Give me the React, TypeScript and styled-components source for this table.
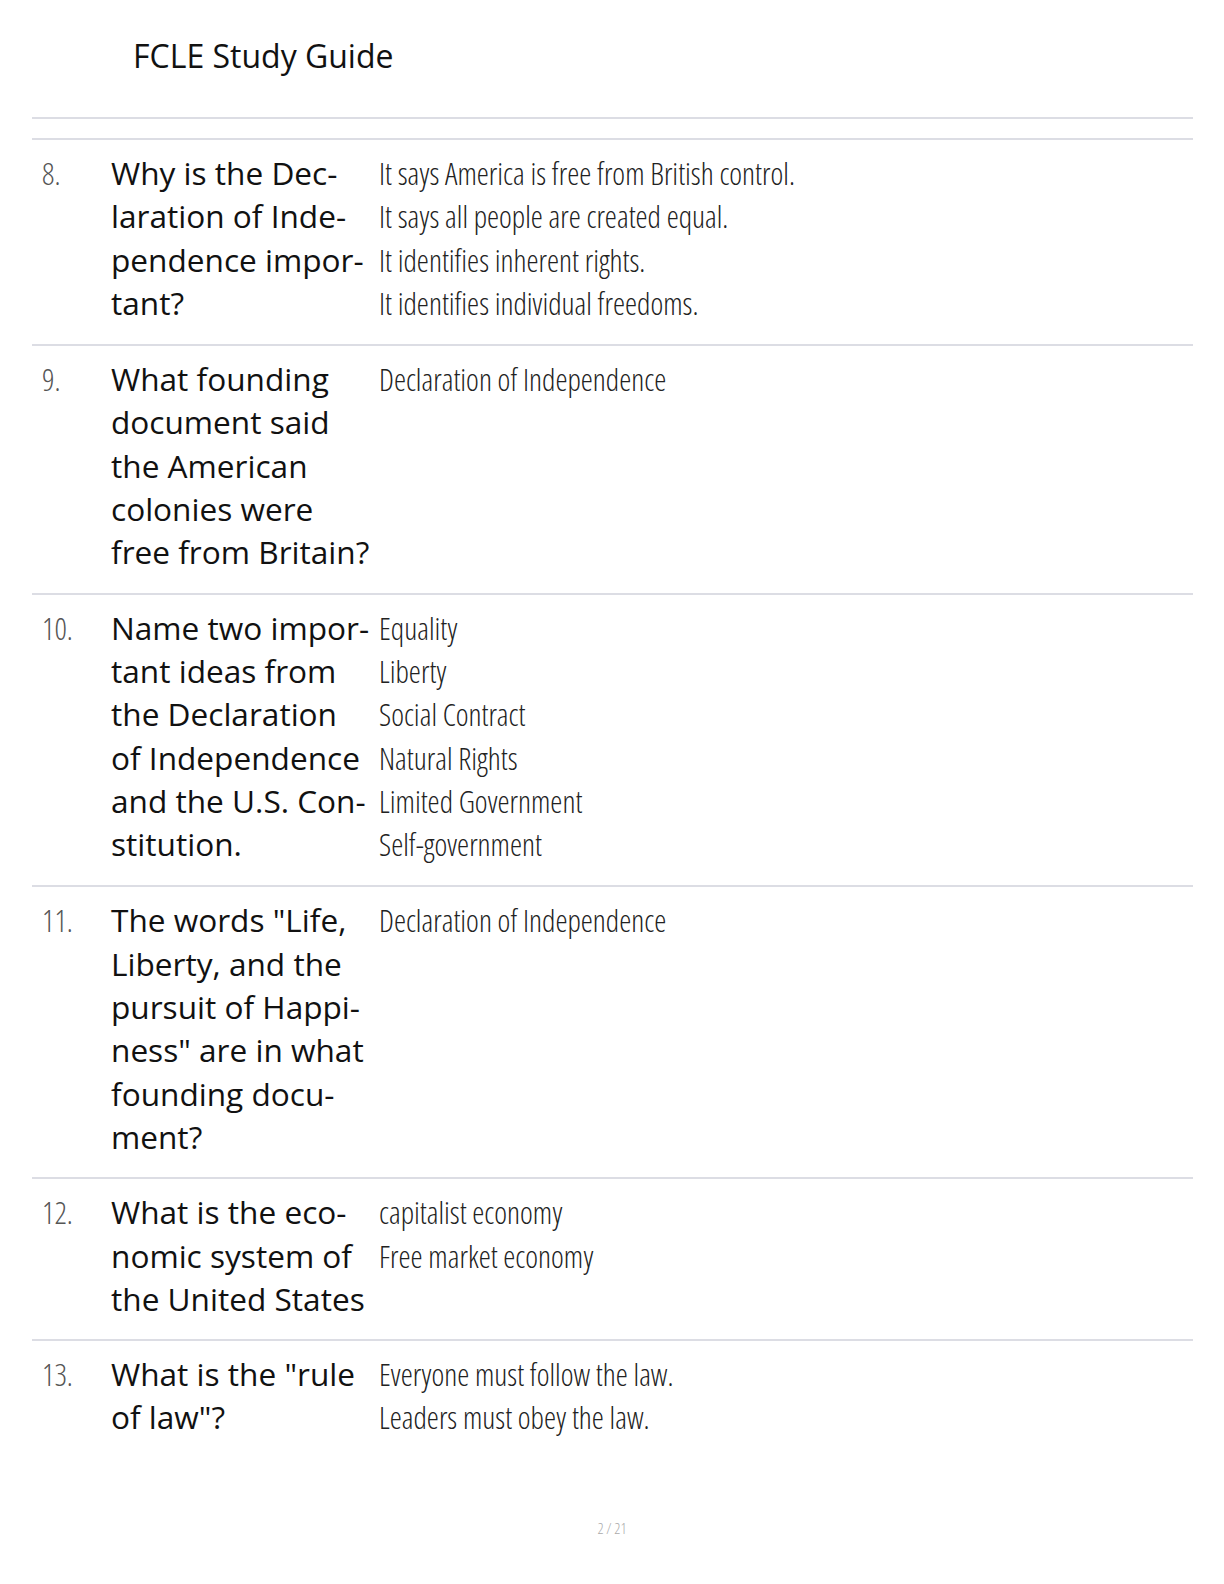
import { FC } from 'react';
import styled, { createGlobalStyle } from 'styled-components';

const GlobalStyle = createGlobalStyle`
	html,
	body {
		margin: 0;
		padding: 0;
		background: #fff;
	}

	body {
		font-family: 'Open Sans', 'Noto Sans', sans-serif;
		color: #111;
	}
`;

interface ICard {
	num: number;
	question: string[];
	answers: string[];
}

const cards: ICard[] = [
	{
		num: 8,
		question: ['Why is the Dec-', 'laration of Inde-', 'pendence impor-', 'tant?'],
		answers: [
			'It says America is free from British control.',
			'It says all people are created equal.',
			'It identifies inherent rights.',
			'It identifies individual freedoms.',
		],
	},
	{
		num: 9,
		question: ['What founding', 'document said', 'the American', 'colonies were', 'free from Britain?'],
		answers: ['Declaration of Independence'],
	},
	{
		num: 10,
		question: [
			'Name two impor-',
			'tant ideas from',
			'the Declaration',
			'of Independence',
			'and the U.S. Con-',
			'stitution.',
		],
		answers: ['Equality', 'Liberty', 'Social Contract', 'Natural Rights', 'Limited Government', 'Self-government'],
	},
	{
		num: 11,
		question: [
			'The words "Life,',
			'Liberty, and the',
			'pursuit of Happi-',
			'ness" are in what',
			'founding docu-',
			'ment?',
		],
		answers: ['Declaration of Independence'],
	},
	{
		num: 12,
		question: ['What is the eco-', 'nomic system of', 'the United States'],
		answers: ['capitalist economy', 'Free market economy'],
	},
	{
		num: 13,
		question: ['What is the "rule', 'of law"?'],
		answers: ['Everyone must follow the law.', 'Leaders must obey the law.'],
	},
];

const App: FC = () => {
	return (
		<>
			<GlobalStyle />
			<Page>
				<Header>FCLE Study Guide</Header>
				<Table>
					<HeadRow />
					{cards.map(({ num, question, answers }) => (
						<Row key={num}>
							<Num>{num}.</Num>
							<Question>
								{question.map((line, i) => (
									<Line key={i}>{line}</Line>
								))}
							</Question>
							<Answer>
								{answers.map((line, i) => (
									<Line key={i}>{line}</Line>
								))}
							</Answer>
						</Row>
					))}
				</Table>
				<Footer>2 / 21</Footer>
			</Page>
		</>
	);
};

export default App;

const Page = styled.div`
	display: flex;
	flex-direction: column;
	width: 1224px;
	min-height: 1584px;
`;

const Header = styled.h1`
	margin: 0;
	padding: 34px 0 0 133px;
	height: 117px;
	box-sizing: border-box;
	font-size: 32px;
	font-weight: 400;
	line-height: 43px;
	color: #111;
`;

const Table = styled.div`
	display: flex;
	flex-direction: column;
	margin: 0 31px 0 32px;
	border-top: 2px solid #dcdde4;
`;

const HeadRow = styled.div`
	height: 19px;
	border-bottom: 2px solid #dcdde4;
`;

const Row = styled.div`
	display: grid;
	grid-template-columns: 79px 268px 1fr;
	align-items: baseline;
	padding: 11px 0 19px;

	& + & {
		border-top: 2px solid #dcdde4;
	}
`;

const Line = styled.div`
	white-space: nowrap;
`;

const Num = styled.div`
	padding-left: 10px;
	font-size: 30.5px;
	font-weight: 300;
	font-stretch: 75%;
	line-height: 43.3px;
	color: #555;
`;

const Question = styled.div`
	font-size: 31.6px;
	font-weight: 500;
	line-height: 43.3px;
	color: #111;
`;

const Answer = styled.div`
	font-size: 30.5px;
	font-weight: 300;
	font-stretch: 75%;
	line-height: 43.3px;
	color: #222;
`;

const Footer = styled.div`
	margin-top: auto;
	padding-bottom: 46px;
	text-align: center;
	font-size: 15px;
	font-weight: 300;
	font-stretch: 75%;
	color: #aaa;
`;
